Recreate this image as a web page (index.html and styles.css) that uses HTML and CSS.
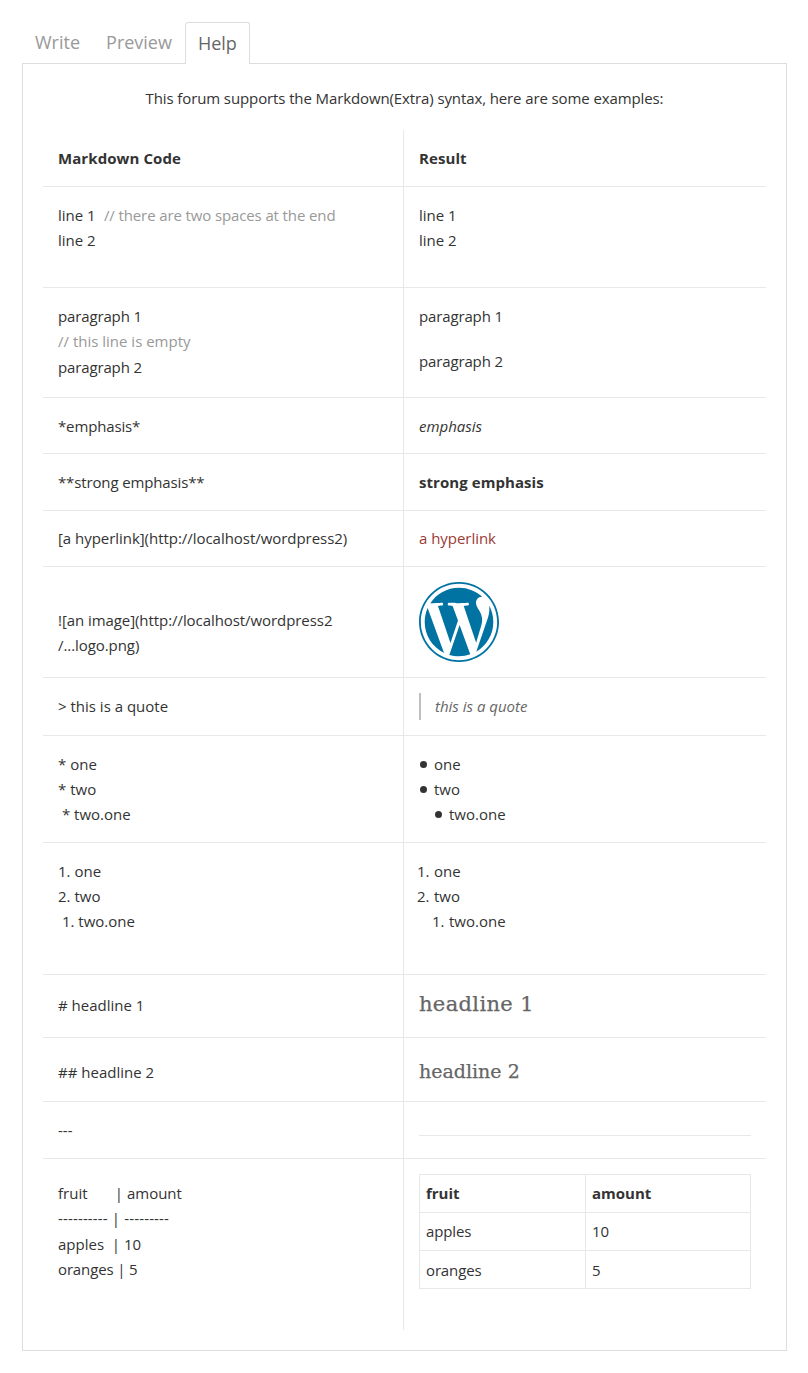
FILE: index.html
```html
<!DOCTYPE html>
<html lang="en">
<head>
<meta charset="utf-8">
<title>Markdown help</title>
<link rel="stylesheet" href="styles.css">
</head>
<body>
<nav class="tabs">
  <a class="tab">Write</a>
  <a class="tab">Preview</a>
  <a class="tab active">Help</a>
</nav>
<main class="panel">
  <p class="intro">This forum supports the Markdown(Extra) syntax, here are some examples:</p>
  <div class="examples">
    <div class="row head"><div class="cell">Markdown Code</div><div class="cell">Result</div></div>
    <div class="row r-lines"><div class="cell">line 1&nbsp; <span class="note long">// there are two spaces at the end</span><br>line 2</div><div class="cell">line 1<br>line 2</div></div>
    <div class="row r-paras"><div class="cell"><span class="tight">paragraph 1</span><br><span class="note">// this line is empty</span><br><span class="tight">paragraph 2</span></div><div class="cell"><p class="para tight">paragraph 1</p><p class="para tight">paragraph 2</p></div></div>
    <div class="row r-em"><div class="cell tight">*emphasis*</div><div class="cell"><em>emphasis</em></div></div>
    <div class="row r-strong"><div class="cell tight">**strong emphasis**</div><div class="cell"><strong class="loose">strong emphasis</strong></div></div>
    <div class="row r-link"><div class="cell">[a hyperlink](http://localhost/wordpress2)</div><div class="cell"><a class="link">a hyperlink</a></div></div>
    <div class="row r-image"><div class="cell">![an image](http://localhost/wordpress2<br>/...logo.png)</div><div class="cell">
      <svg class="logo" viewBox="0 0 122.52 122.523">
        <path d="m8.708 61.26c0 20.802 12.089 38.779 29.619 47.298l-25.069-68.686c-2.916 6.536-4.55 13.769-4.55 21.388z"/>
        <path d="m96.74 58.608c0-6.495-2.333-10.993-4.334-14.494-2.664-4.329-5.161-7.995-5.161-12.324 0-4.831 3.664-9.328 8.825-9.328.233 0 .454.029.681.042-9.35-8.566-21.807-13.796-35.489-13.796-18.36 0-34.513 9.42-43.91 23.688 1.233.037 2.395.063 3.382.063 5.497 0 14.006-.667 14.006-.667 2.833-.167 3.167 3.994.337 4.329 0 0-2.847.335-6.015.501l19.138 56.925 11.501-34.493-8.188-22.434c-2.83-.166-5.511-.501-5.511-.501-2.832-.166-2.5-4.496.332-4.329 0 0 8.679.667 13.843.667 5.496 0 14.006-.667 14.006-.667 2.835-.167 3.168 3.994.337 4.329 0 0-2.853.335-6.015.501l18.992 56.494 5.242-17.517c2.272-7.269 4.001-12.49 4.001-16.989z"/>
        <path d="m62.184 65.857-15.768 45.819c4.708 1.384 9.687 2.141 14.846 2.141 6.12 0 11.989-1.058 17.452-2.979-.141-.225-.269-.464-.374-.724z"/>
        <path d="m107.376 36.046c.226 1.674.354 3.471.354 5.404 0 5.333-.996 11.328-3.996 18.824l-16.053 46.413c15.624-9.111 26.133-26.038 26.133-45.426.001-9.137-2.333-17.729-6.438-25.215z"/>
        <path d="m61.262 0c-33.779 0-61.262 27.481-61.262 61.26 0 33.783 27.483 61.263 61.262 61.263 33.778 0 61.265-27.48 61.265-61.263-.001-33.779-27.487-61.26-61.265-61.26zm0 119.715c-32.23 0-58.453-26.223-58.453-58.455 0-32.23 26.222-58.451 58.453-58.451 32.229 0 58.45 26.221 58.45 58.451 0 32.232-26.221 58.455-58.45 58.455z"/>
      </svg></div></div>
    <div class="row r-quote"><div class="cell">&gt; this is a quote</div><div class="cell"><blockquote class="quote">this is a quote</blockquote></div></div>
    <div class="row r-ul"><div class="cell">* one<br>* two<br>&nbsp;* two.one</div><div class="cell">
      <ul class="list"><li><i class="dot"></i>one</li><li><i class="dot"></i>two</li><li class="nested"><i class="dot"></i>two.one</li></ul></div></div>
    <div class="row r-ol"><div class="cell">1. one<br>2. two<br>&nbsp;1. two.one</div><div class="cell">
      <ul class="list"><li><span class="num">1.</span>one</li><li><span class="num">2.</span>two</li><li class="nested"><span class="num">1.</span>two.one</li></ul></div></div>
    <div class="row r-h1"><div class="cell"># headline 1</div><div class="cell"><h1 class="h1">headline 1</h1></div></div>
    <div class="row r-h2"><div class="cell">## headline 2</div><div class="cell"><h2 class="h2">headline 2</h2></div></div>
    <div class="row r-hr"><div class="cell">---</div><div class="cell"><hr class="rule"></div></div>
    <div class="row r-table"><div class="cell">fruit&nbsp;&nbsp;&nbsp;&nbsp;&nbsp;&nbsp; | amount<br><span class="dashes">---------- | ---------</span><br>apples&nbsp; | 10<br><span class="tight">oranges | 5</span></div><div class="cell">
      <div class="fruit">
        <b>fruit</b><b>amount</b>
        <span class="tight">apples</span><span>10</span>
        <span class="last tight">oranges</span><span class="last">5</span>
      </div></div></div>
  </div>
</main>
</body>
</html>
```
FILE: styles.css
```css
* { box-sizing: border-box; }
body {
  margin: 0;
  padding: 22px 21px 22px 22px;
  height: 1373px;
  background: #fff;
  color: #333;
  font: 15px/25.2px "Open Sans", "Noto Sans", sans-serif;
}
.tabs { display: flex; height: 42px; font-size: 18px; line-height: 41px; color: #999; }
.tab { padding: 0 13px; }
.tab.active {
  z-index: 1;
  padding: 0 12px;
  border: 1px solid #ddd;
  border-bottom: 0;
  border-radius: 3px 3px 0 0;
  background: #fff;
  color: #666;
}
.panel { margin-top: -1px; height: 1288px; padding: 22px 20px 0; border: 1px solid #ddd; }
.intro { margin: 0 0 19px; text-align: center; letter-spacing: -0.11px; }
.row { display: grid; grid-template-columns: 361px 362px; border-bottom: 1px solid #e8e8e8; }
.cell { padding: 16px 15px 0; }
.cell:first-child { border-right: 1px solid #e8e8e8; }
.tight { letter-spacing: -0.14px; }
.loose { letter-spacing: 0.06px; }
.head { height: 57px; font-weight: 700; letter-spacing: 0.08px; }
.note { color: #999; }
.long { margin-left: 0.5px; letter-spacing: -0.12px; }
.para { margin: 0 0 20px; }
.r-lines { height: 101px; }
.r-paras { height: 110px; }
.r-em { height: 56px; }
.r-strong { height: 57px; }
.r-link { height: 56px; letter-spacing: -0.04px; }
.r-link .cell { padding-top: 15px; }
.link { color: #9a3b35; }
.r-image { height: 111px; letter-spacing: -0.07px; }
.r-image .cell { padding-top: 15px; }
.r-image .cell:first-child { padding-top: 41px; }
.logo { display: block; width: 80px; height: 80px; fill: #0073a3; }
.r-quote { height: 58px; }
.r-quote .cell:last-child { padding-top: 15px; }
.quote {
  margin: 0;
  height: 27px;
  padding: 1px 0 0 14px;
  border-left: 2px solid #bfbfbf;
  color: #666;
  font-style: italic;
}
.r-ul { height: 107px; line-height: 25px; }
.list { margin: 0; padding: 0; list-style: none; }
.list li { display: flex; align-items: center; }
.list .nested { padding-left: 15px; }
.dot { width: 7px; height: 7px; margin: 0 7px 0 1px; border-radius: 50%; background: #333; }
.num { width: 17px; margin-left: -2px; }
.r-ol { height: 132px; line-height: 25px; }
.r-h1 { height: 63px; }
.r-h1 .cell { padding-top: 15px; }
.r-h1 .cell:first-child { padding-top: 18px; }
.r-h2 { height: 64px; }
.r-h2 .cell { padding-top: 15px; }
.r-h2 .cell:first-child { padding-top: 22px; }
.h1, .h2 {
  margin: 0;
  color: #666;
  font-family: "DejaVu Serif", serif;
  font-weight: 400;
  -webkit-text-stroke: 0.25px #666;
}
.h1 { font-size: 21px; line-height: 28px; letter-spacing: 0.35px; }
.h2 { padding-top: 4px; font-size: 19px; line-height: 28px; }
.r-hr { height: 57px; }
.rule { margin: 17px 0 0; border: 0; border-top: 1px solid #e8e8e8; }
.r-table { height: 171px; border-bottom: 0; }
.r-table .cell { padding-top: 15px; }
.r-table .cell:first-child { padding-top: 22px; }
.dashes { letter-spacing: 0.15px; }
.fruit {
  display: grid;
  grid-template-columns: 166px 165px;
  grid-template-rows: 38px 38px 38px;
  border: solid #e8e8e8;
  border-width: 1px 0 0 1px;
  line-height: 37px;
}
.fruit > * { padding-left: 6px; border: solid #e8e8e8; border-width: 0 1px 1px 0; }
.fruit .last { padding-top: 1px; line-height: 36px; }
```
